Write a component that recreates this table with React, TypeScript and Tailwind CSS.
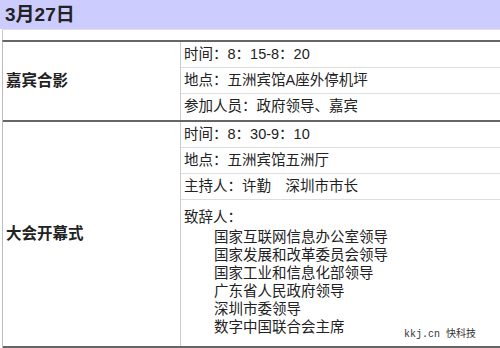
import React from 'react';

// 议程数据
const agenda = [
  {
    title: '嘉宾合影',
    rows: ['时间：8：15-8：20', '地点：五洲宾馆A座外停机坪', '参加人员：政府领导、嘉宾'],
  },
  {
    title: '大会开幕式',
    rows: ['时间：8：30-9：10', '地点：五洲宾馆五洲厅', '主持人：许勤　深圳市市长'],
    speakers: [
      '国家互联网信息办公室领导',
      '国家发展和改革委员会领导',
      '国家工业和信息化部领导',
      '广东省人民政府领导',
      '深圳市委领导',
      '数字中国联合会主席',
    ],
  },
];

const App: React.FC = () => {
  return (
    <div
      className="w-[500px] h-[348px] bg-white overflow-hidden text-[#222]"
      style={{ fontFamily: '"Liberation Sans", "Noto Sans CJK SC", sans-serif' }}
    >
      {/* Date header */}
      <div className="h-[29px] bg-[#ccccff] flex items-center pl-[5px]">
        <span className="text-[19px] font-bold leading-none">3月27日</span>
      </div>
      <div className="h-[11px] border-t border-[#e0e0ee] border-l border-l-[#ccc] ml-[2px]" />

      {/* Table */}
      <div className="border-t-2 border-[#666] ml-[2px] border-l border-l-[#bbb]">
        {/* 嘉宾合影 */}
        <div className="flex border-b-2 border-[#666]">
          <div className="w-[178px] flex items-center pl-[3px] border-r border-[#ccc]">
            <span className="text-[15.5px] font-bold">{agenda[0].title}</span>
          </div>
          <div className="flex-1">
            {agenda[0].rows.map((r, i) => (
              <div
                key={i}
                className={`h-[26px] flex items-center pl-[3px] text-[14.5px] ${i < 2 ? 'border-b border-[#ddd]' : ''}`}
              >
                {r}
              </div>
            ))}
          </div>
        </div>

        {/* 大会开幕式 */}
        <div className="flex h-[226px] border-b-2 border-[#666]">
          <div className="w-[178px] flex items-center pl-[3px] border-r border-[#ccc]">
            <span className="text-[15.5px] font-bold">{agenda[1].title}</span>
          </div>
          <div className="flex-1 flex flex-col">
            {agenda[1].rows.map((r, i) => (
              <div key={i} className="h-[26px] flex items-center pl-[3px] text-[14.5px] border-b border-[#ddd]">
                {r}
              </div>
            ))}
            <div className="flex-1 relative pl-[3px] pt-[8px] text-[14.5px] leading-[18px]">
              <div>致辞人：</div>
              <div className="pl-[30px] pt-[2px]">
                {agenda[1].speakers!.map((s, i) => (
                  <div key={i}>{s}</div>
                ))}
              </div>
              <div
                className="absolute right-[24px] bottom-[2px] text-[10px] text-[#333]"
                style={{ fontFamily: '"Liberation Mono", "Noto Sans CJK SC", monospace' }}
              >
                kkj.cn 快科技
              </div>
            </div>
          </div>
        </div>
      </div>
    </div>
  );
};

export default App;
